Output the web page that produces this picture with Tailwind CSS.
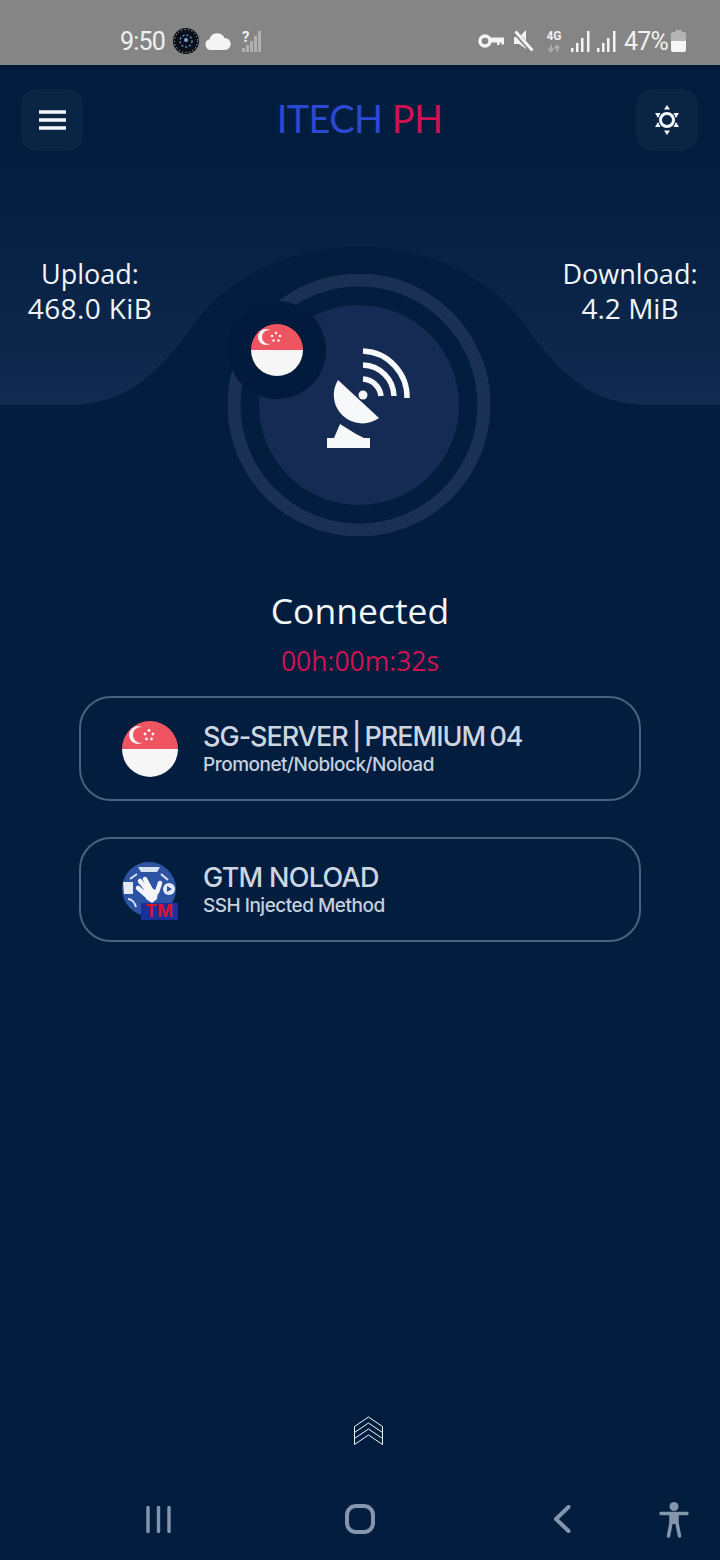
<!DOCTYPE html>
<html lang="en">

<head>
    <meta charset="UTF-8">
    <meta name="viewport" content="width=device-width, initial-scale=1.0">
    <title>ITECH PH</title>
    <script src="https://cdn.jsdelivr.net/npm/@tailwindcss/browser@4"></script>
</head>

<body class="overflow-hidden">
    <div class="relative w-[720px] h-[1560px] overflow-hidden flex flex-col bg-[#021d3e] font-['Inter',sans-serif]">

        <!-- Status bar -->
        <div class="h-[65px] shrink-0 bg-[#858585] flex items-center pt-[17px] text-[#f0f0f0] font-['Roboto',sans-serif]">
            <span class="ml-[120px] w-[44px] text-[25px] leading-none tracking-[-0.8px]">9:50</span>
            <svg class="ml-[9px]" width="26" height="26" viewBox="0 0 26 26">
                <circle cx="13" cy="13" r="13" fill="#0b0f18" />
                <circle cx="13" cy="13" r="11.5" fill="none" stroke="#dfe7f2" stroke-width="1" stroke-dasharray="1 2.5" />
                <circle cx="13" cy="13" r="6" fill="none" stroke="#5d89c4" stroke-width="1.5" stroke-dasharray="2 2" />
                <circle cx="13" cy="12" r="2" fill="#7fa8dc" />
            </svg>
            <svg class="ml-[6px]" width="26" height="18" viewBox="0 0 26 18">
                <path d="M6 18a5.500 5.500 0 0 1-1.500-10.800A8 8 0 0 1 19.500 6 6 6 0 0 1 20 18z" fill="#f4f4f4" />
            </svg>
            <svg class="ml-[10px] overflow-visible" width="21" height="22" viewBox="0 0 21 22">
                <path d="M1 22v-4h3v4zM5 22v-7h3v7zM9 22V11h3v11zM13 22V6h3v16zM17 22V1h3v21z" fill="#b0b0b0" />
                <text x="1" y="12" font-size="15" font-weight="700" font-family="Roboto" fill="#efefef">?</text>
            </svg>

            <svg class="ml-[216px]" width="26" height="14" viewBox="0 0 26 14">
                <circle cx="7" cy="7" r="5" fill="none" stroke="#f4f4f4" stroke-width="3.400" />
                <path d="M12 3.500h14v7h-2.500v-2h-2v2.500h-2.500v-2.500H12z" fill="#f4f4f4" />
            </svg>
            <svg class="ml-[10px]" width="20" height="22" viewBox="0 0 20 22">
                <path d="M0 7h5l7-7v19l-7-5H0z" fill="#f4f4f4" />
                <path d="M1 2l17 19" stroke="#858585" stroke-width="5" />
                <path d="M1.500 1.500l17 19" stroke="#f4f4f4" stroke-width="3" />
            </svg>
            <div class="ml-[12px] w-[16px] flex flex-col items-center">
                <span class="text-[12px] leading-[11px] font-bold">4G</span>
                <svg class="mt-[3px]" width="14" height="7" viewBox="0 0 14 7">
                    <path d="M4 0v5M1.500 3.500L4 6.500l2.500-3M10 7V2M7.500 3.500L10 .5l2.500 3" fill="none" stroke="#b0b0b0" stroke-width="1.600" />
                </svg>
            </div>
            <svg class="ml-[9px]" width="19" height="22" viewBox="0 0 19 22">
                <path d="M0 18h2.500v4H0zM5 13h2.500v9H5zM10 8h2.500v14H10zM16 1h2.500v21H16z" fill="#f4f4f4" />
            </svg>
            <svg class="ml-[7px]" width="19" height="22" viewBox="0 0 19 22">
                <path d="M0 18h2.500v4H0zM5 13h2.500v9H5zM10 8h2.500v14H10zM16 1h2.500v21H16z" fill="#f4f4f4" />
            </svg>
            <span class="ml-[8px] w-[44px] text-[25px] leading-none tracking-[-0.8px]">47%</span>
            <svg class="ml-[3px]" width="15" height="22" viewBox="0 0 15 22">
                <path d="M4.500 0h6v2H13a2 2 0 0 1 2 2v7H0V4a2 2 0 0 1 2-2h2.500z" fill="#b5b5b5" />
                <path d="M0 11h15v9a2 2 0 0 1-2 2H2a2 2 0 0 1-2-2z" fill="#f6f6f6" />
            </svg>
        </div>

        <div class="relative flex-1 flex flex-col">
            <!-- darker strip under the status bar -->
            <div class="absolute top-0 left-0 w-full h-[5px] bg-[#011838]"></div>

            <!-- Background wave -->
            <svg class="absolute top-0 left-0" width="720" height="360" viewBox="0 65 720 360">
                <defs>
                    <linearGradient id="wave" x1="0" y1="0" x2="0" y2="1">
                        <stop offset="0" stop-color="#021d3e" />
                        <stop offset="1" stop-color="#112a4f" />
                    </linearGradient>
                </defs>
                <path d="M0 405H70C120 405 150 380 180 343C195 323 205 307 223 293C250 270 300 247 359 247C418 247 468 270 495 293C513 307 523 323 538 343C568 380 598 405 648 405H720V165H0Z" fill="url(#wave)" />
            </svg>

            <!-- Header -->
            <div class="relative flex items-center justify-between pl-[21px] pr-[22px] pt-[24px]">
                <div class="w-[62px] h-[62px] rounded-2xl bg-[#0a2444] flex items-center justify-center">
                    <svg width="27" height="20" viewBox="0 0 27 20">
                        <path d="M0 2h27M0 10h27M0 18h27" stroke="#f2f7fb" stroke-width="3.400" />
                    </svg>
                </div>
                <div class="text-[38px] leading-none pb-[4px] font-['Lato',sans-serif] font-normal tracking-[-0.6px]">
                    <span class="text-[#2c49d4]">ITECH</span> <span class="text-[#cc1352]">PH</span>
                </div>
                <div class="w-[62px] h-[62px] rounded-2xl bg-[#0a2444] flex items-center justify-center">
                    <svg width="26" height="30" viewBox="0 0 26 30">
                        <circle cx="13" cy="15" r="6.500" fill="none" stroke="#f4f8fb" stroke-width="3" />
                        <path d="M13 0l3 4.500h-6zM13 30l3-4.500h-6zM1 8l5.500 0-2.500 5zM25 8l-5.500 0 2.500 5zM1 22l5.500 0-2.500-5zM25 22l-5.500 0 2.500-5z" fill="#f4f8fb" />
                    </svg>
                </div>
            </div>

            <!-- Stats and connection ring -->
            <div class="relative flex items-start pl-[28px] mt-[105px] text-[#f2f6fa] text-[27px] leading-[35px] text-center font-['Open_Sans',sans-serif]">
                <div class="w-[124px] whitespace-nowrap flex flex-col items-center">
                    <span>Upload:</span>
                    <span class="text-[28px] tracking-[0.4px]">468.0 KiB</span>
                </div>
                <svg class="ml-[76px] mt-[18px] shrink-0" width="262" height="262" viewBox="228 274 262 262">
                    <circle cx="359" cy="405" r="125" fill="none" stroke="#1a3054" stroke-width="13" />
                    <circle cx="359" cy="405" r="100" fill="#162b53" />
                    <circle cx="277" cy="350" r="49" fill="#021b3c" />
                    <clipPath id="flagHero">
                        <circle cx="277" cy="350" r="26" />
                    </clipPath>
                    <g clip-path="url(#flagHero)">
                        <rect x="251" y="324" width="52" height="26" fill="#ee5560" />
                        <rect x="251" y="350" width="52" height="26" fill="#f6f6f6" />
                        <circle cx="266" cy="337" r="8" fill="#f6f6f6" />
                        <circle cx="269" cy="337" r="7" fill="#ee5560" />
                        <g fill="#f6f6f6">
                            <circle cx="276" cy="333" r="1.300" />
                            <circle cx="280" cy="336" r="1.300" />
                            <circle cx="278.500" cy="340.500" r="1.300" />
                            <circle cx="273.500" cy="340.500" r="1.300" />
                            <circle cx="272" cy="336" r="1.300" />
                        </g>
                    </g>
                    <!-- dish -->
                    <path d="M338 380A28.500 28.500 0 0 0 379 418Z" fill="#f6f8fa" />
                    <circle cx="363" cy="395" r="4.500" fill="#f6f8fa" />
                    <path d="M340 424L334 438H327V448H370V438H364L356 434Z" fill="#f6f8fa" />
                    <path d="M363 351A46 46 0 0 1 407 398M363 365A32 32 0 0 1 394 396M363 379A19 19 0 0 1 381 396" fill="none" stroke="#f6f8fa" stroke-width="5.500" />
                </svg>
                <div class="ml-[72px] w-[136px] whitespace-nowrap flex flex-col items-center">
                    <span>Download:</span>
                    <span class="text-[28px]">4.2 MiB</span>
                </div>
            </div>

            <!-- Connection state -->
            <div class="relative mt-[54px] text-center text-[35.500px] leading-[40px] text-[#f4f7fa] font-['Open_Sans',sans-serif]">Connected</div>
            <div class="mt-[16px] text-center text-[26.500px] leading-[30px] text-[#cc1352] font-['Open_Sans',sans-serif]">00h:00m:32s</div>

            <!-- Server card -->
            <div class="mx-[79px] mt-[20px] h-[105px] rounded-[32px] border-2 border-[#4a627f] flex items-center pl-[41px]">
                <svg class="shrink-0" width="56" height="56" viewBox="0 0 56 56">
                    <clipPath id="flagCard">
                        <circle cx="28" cy="28" r="28" />
                    </clipPath>
                    <g clip-path="url(#flagCard)">
                        <rect width="56" height="28" fill="#ee5560" />
                        <rect y="28" width="56" height="28" fill="#f6f6f6" />
                        <circle cx="16" cy="14" r="9" fill="#f6f6f6" />
                        <circle cx="19" cy="14" r="8" fill="#ee5560" />
                        <g fill="#f6f6f6">
                            <circle cx="27" cy="9.500" r="1.400" />
                            <circle cx="31" cy="13" r="1.400" />
                            <circle cx="29.500" cy="18" r="1.400" />
                            <circle cx="24.500" cy="18" r="1.400" />
                            <circle cx="23" cy="13" r="1.400" />
                        </g>
                    </g>
                </svg>
                <div class="ml-[25px] flex flex-col">
                    <span class="text-[27px] leading-[32px] font-medium tracking-[-1px] [word-spacing:-2px] text-[#cdd6e3] whitespace-nowrap">SG-SERVER | PREMIUM 04</span>
                    <span class="text-[19px] leading-[24px] font-medium tracking-[-0.5px] text-[#c6d0de] whitespace-nowrap">Promonet/Noblock/Noload</span>
                </div>
            </div>

            <!-- Tweak card -->
            <div class="mx-[79px] mt-[36px] h-[105px] rounded-[32px] border-2 border-[#4a627f] flex items-center pl-[41px]">
                <div class="relative shrink-0 w-[56px] h-[56px]">
                    <svg width="54" height="54" viewBox="0 0 54 54">
                        <circle cx="27" cy="27" r="27" fill="#2d54a4" />
                        <path d="M16 5h22l-3 5H19z" fill="#d9e2f2" />
                        <path d="M1 20h10v12H2z" fill="#e6ecf6" />
                        <circle cx="47" cy="27" r="6" fill="#e6ecf6" />
                        <path d="M45 24l5 3-5 3z" fill="#2d54a4" />
                        <path d="M8 17l7-5M39 12l7 6M6 37c3 0 7 3 8 8" fill="none" stroke="#d9e2f2" stroke-width="2" />
                        <path d="M18 19l8 10M23 17l6 11M16 26l8 7M35 30l3-9" fill="none" stroke="#f4f6fa" stroke-width="4.500" stroke-linecap="round" />
                        <path d="M21 28l8-2 7 3-1 8-5 4-6-4z" fill="#f4f6fa" />
                    </svg>
                    <div class="absolute left-[19px] bottom-[-2px] w-[37px] h-[17px] bg-[#1b2f9a] flex items-center justify-center text-[17px] leading-none font-bold text-[#d5182b] tracking-[0.5px]">TM</div>
                </div>
                <div class="ml-[25px] flex flex-col">
                    <span class="text-[27px] leading-[32px] font-medium tracking-[-0.7px] text-[#cdd6e3] whitespace-nowrap">GTM NOLOAD</span>
                    <span class="text-[19px] leading-[24px] font-medium tracking-[-0.5px] text-[#c6d0de] whitespace-nowrap">SSH Injected Method</span>
                </div>
            </div>

            <!-- Pull up handle -->
            <div class="mt-auto pl-[354px]">
                <svg width="29" height="31" viewBox="0 0 29 31">
                    <path d="M.5 10.500L14.500 1l14 9.500v6L14.500 7 .5 16.500zM.5 16.500v6L14.500 13l14 9.500v-6M.5 22.500v6L14.500 19l14 9.500v-6" fill="none" stroke="#f4f8fb" stroke-width="1" />
                </svg>
            </div>

            <!-- Navigation bar -->
            <div class="h-[113px] shrink-0 flex items-center pl-[146px]">
                <svg class="mt-[31px]" width="25" height="27" viewBox="0 0 25 27">
                    <path d="M2 1.500v24M12.500 1.500v24M23 1.500v24" stroke="#8496ad" stroke-width="3.400" stroke-linecap="round" />
                </svg>
                <svg class="ml-[174px] mt-[31px]" width="30" height="30" viewBox="0 0 30 30">
                    <rect x="2" y="2" width="26" height="26" rx="9" fill="none" stroke="#8496ad" stroke-width="4" />
                </svg>
                <svg class="ml-[178px] mt-[31px]" width="18" height="28" viewBox="0 0 18 28">
                    <path d="M15.500 2L3 14l12.500 12" fill="none" stroke="#8496ad" stroke-width="4" stroke-linecap="round" stroke-linejoin="round" />
                </svg>
                <svg class="ml-[88px] mt-[33px]" width="30" height="36" viewBox="0 0 30 36">
                    <circle cx="15" cy="4.500" r="4.500" fill="#8496ad" />
                    <path d="M2 11.500h26M12 12v9l-2.500 13M18 12v9l2.500 13" fill="none" stroke="#8496ad" stroke-width="3.500" stroke-linecap="round" />
                    <path d="M11 12h8v10h-8z" fill="#8496ad" />
                </svg>
            </div>
        </div>
    </div>
</body>

</html>
